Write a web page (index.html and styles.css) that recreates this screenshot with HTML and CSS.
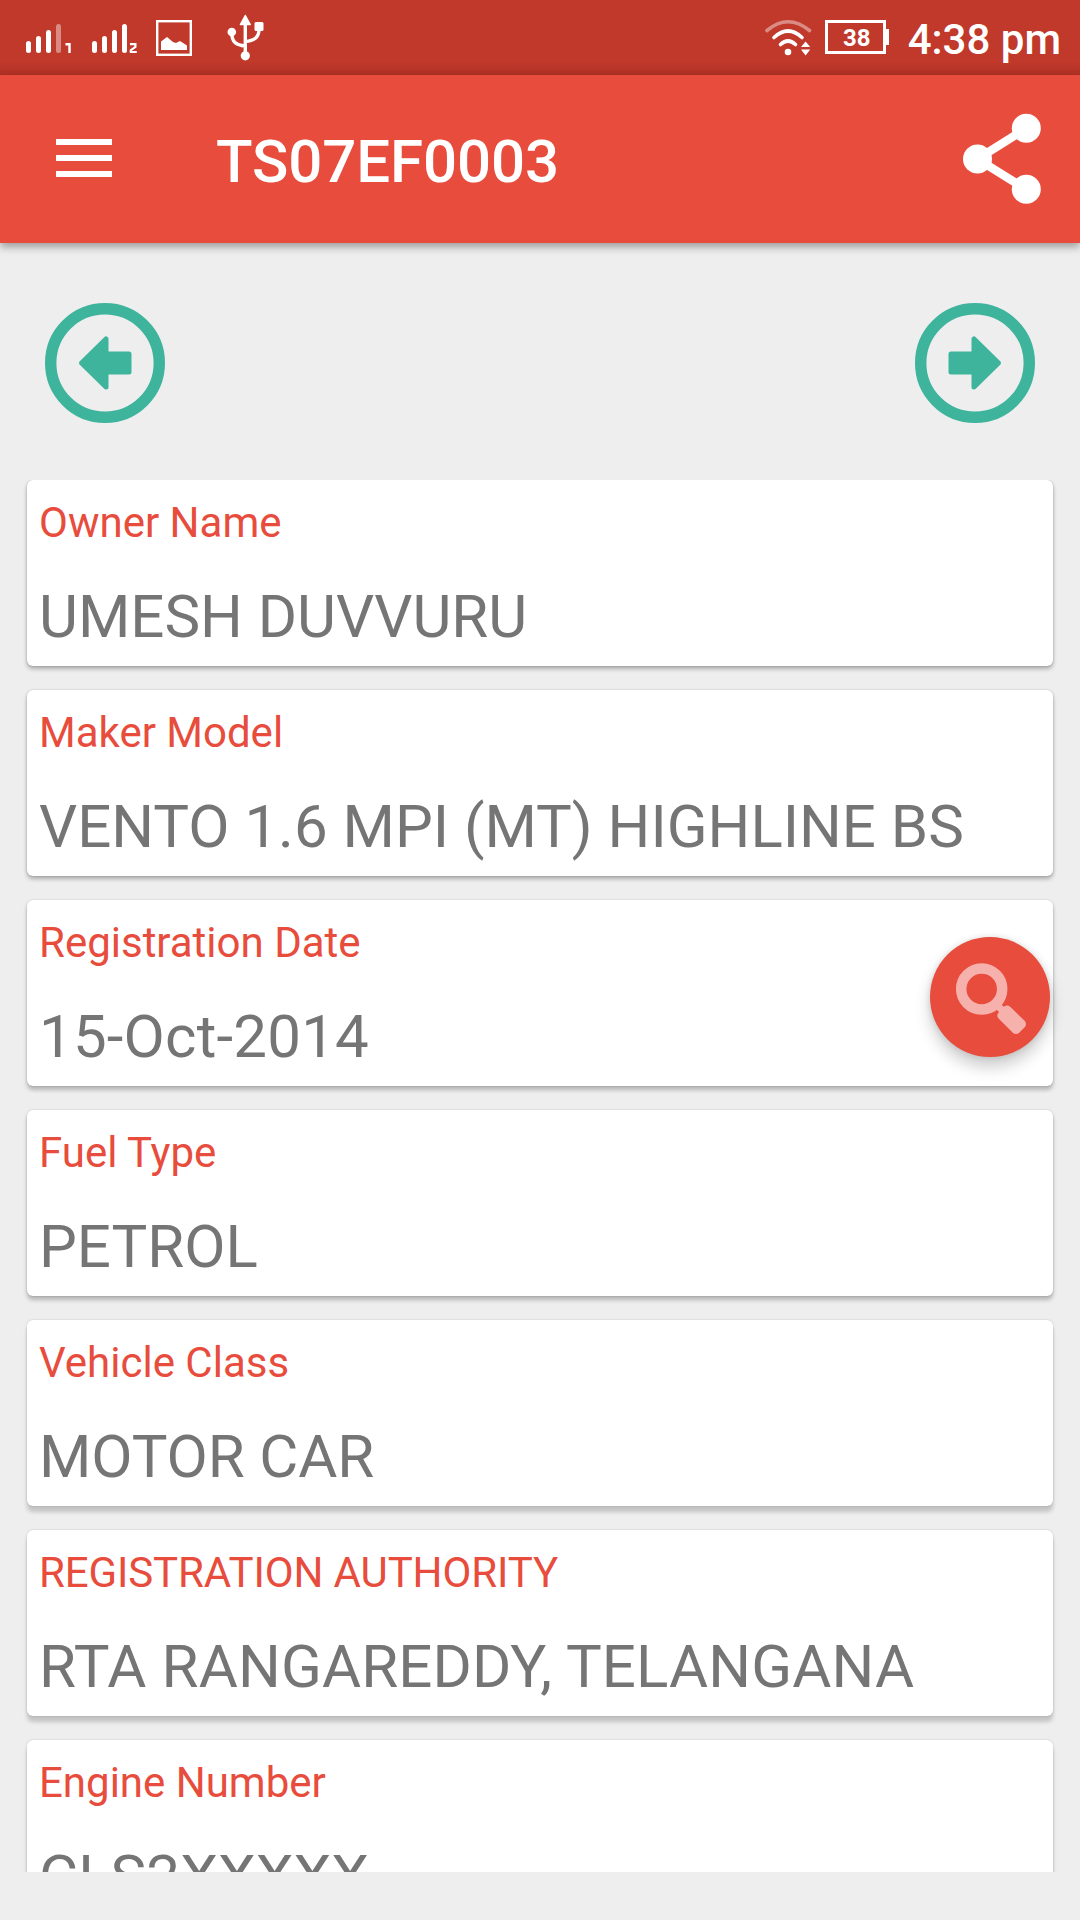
FILE: index.html
```html
<!DOCTYPE html>
<html lang="en">
<head>
<meta charset="utf-8">
<title>TS07EF0003</title>
<link rel="stylesheet" href="styles.css">
</head>
<body>
<div class="screen">
  <div class="status-bar">
    <div class="status-left">
      <svg class="signal" width="48" height="36" viewBox="0 0 48 36" fill="#fff">
        <rect x="2" y="21" width="5" height="12" rx="2.5"/>
        <rect x="12" y="16" width="5" height="17" rx="2.5"/>
        <rect x="22" y="10" width="5" height="23" rx="2.5"/>
        <rect x="32" y="4" width="5" height="29" rx="2.5" opacity=".42"/>
        <path d="M41.500 24.200h4v8.800" fill="none" stroke="#fff" stroke-width="2.400"/>
      </svg>
      <svg class="signal" width="48" height="36" viewBox="0 0 48 36" fill="#fff">
        <rect x="2" y="21" width="5" height="12" rx="2.5"/>
        <rect x="12" y="16" width="5" height="17" rx="2.5"/>
        <rect x="22" y="10" width="5" height="23" rx="2.5"/>
        <rect x="32" y="4" width="5" height="29" rx="2.5"/>
        <path d="M40 24.200h5.400v2.800l-4.600 3.200v1.800h6" fill="none" stroke="#fff" stroke-width="2.200"/>
      </svg>
      <svg class="picture" width="36" height="36" viewBox="0 0 36 36">
        <rect x="1.200" y="1.200" width="33.600" height="33.600" fill="none" stroke="#fff" stroke-width="2.400"/>
        <path d="M5 30V21.500L11 17l6 5 3 1 4-2 7 4.500V30z" fill="#fff"/>
      </svg>
      <svg class="usb" width="38" height="48" viewBox="0 0 38 48" fill="#fff">
        <path d="M18.300 2.500L23.200 11.500H13.400z" stroke="#fff" stroke-width="1.500" stroke-linejoin="round"/>
        <circle cx="4.800" cy="19" r="4.300"/>
        <rect x="27.500" y="9" width="9" height="9" rx="1.500"/>
        <circle cx="18.300" cy="42.800" r="4.600"/>
        <path d="M18.300 10V40M4.800 20c0 9 4 12 13.500 13M32 16c0 9-5 11.500-13.700 12.500" fill="none" stroke="#fff" stroke-width="3.400"/>
      </svg>
    </div>
    <div class="status-right">
      <svg class="wifi" width="48" height="40" viewBox="0 0 48 40" fill="none" stroke="#fff" stroke-width="3.600" stroke-linecap="round">
        <path d="M3 12.500Q24 -5 45.500 12.500" opacity=".42"/>
        <path d="M10 19.500Q24 6.500 38 19.500"/>
        <path d="M16.500 26.500Q24 19.500 31.500 26.500"/>
        <circle cx="24" cy="34" r="3.300" fill="#fff" stroke="none"/>
        <path d="M41.600 23.500l4.600 5.500H37zM41.600 37.500l4.600-6H37z" fill="#fff" stroke="none"/>
      </svg>
      <div class="battery">38</div>
      <div class="clock">4:38 pm</div>
    </div>
  </div>

  <header class="app-bar">
    <div class="menu"><span></span><span></span><span></span></div>
    <h1 class="title">TS07EF0003</h1>
    <svg class="share" width="80" height="92" viewBox="0 0 80 92" fill="#fff">
      <path d="M64.300 15.300L15.500 46l48.800 30.300" fill="none" stroke="#fff" stroke-width="8.500"/>
      <circle cx="64.300" cy="15.300" r="14.500"/>
      <circle cx="15.500" cy="46" r="14.500"/>
      <circle cx="64.300" cy="76.300" r="14.500"/>
    </svg>
  </header>

  <nav class="pager">
    <svg class="arrow" width="120" height="120" viewBox="0 0 120 120">
      <circle cx="60" cy="60" r="54.300" fill="none" stroke="#3eb49d" stroke-width="11.400"/>
      <path d="M36.500 60L61 36V51H84V69H61V84z" fill="#3eb49d" stroke="#3eb49d" stroke-width="5" stroke-linejoin="round"/>
    </svg>
    <svg class="arrow arrow-next" width="120" height="120" viewBox="0 0 120 120">
      <circle cx="60" cy="60" r="54.300" fill="none" stroke="#3eb49d" stroke-width="11.400"/>
      <path d="M36.500 60L61 36V51H84V69H61V84z" fill="#3eb49d" stroke="#3eb49d" stroke-width="5" stroke-linejoin="round"/>
    </svg>
  </nav>

  <main class="cards">
    <section class="card"><div class="label">Owner Name</div><div class="value">UMESH DUVVURU</div></section>
    <section class="card"><div class="label">Maker Model</div><div class="value">VENTO 1.6 MPI (MT) HIGHLINE BS</div></section>
    <section class="card"><div class="label">Registration Date</div><div class="value value-date">15-Oct-2014</div></section>
    <section class="card"><div class="label">Fuel Type</div><div class="value">PETROL</div></section>
    <section class="card"><div class="label">Vehicle Class</div><div class="value value-class">MOTOR CAR</div></section>
    <section class="card"><div class="label label-caps">REGISTRATION AUTHORITY</div><div class="value value-authority">RTA RANGAREDDY, TELANGANA</div></section>
    <section class="card"><div class="label">Engine Number</div><div class="value value-authority">CLS2XXXXX</div></section>
  </main>

  <div class="search-button">
    <svg width="120" height="120" viewBox="0 0 120 120" fill="none" stroke="#f7b1ad">
      <circle cx="51.700" cy="52" r="20.500" stroke-width="10.500"/>
      <path d="M65 66L74 75" stroke-width="7"/>
      <path d="M77 73L91.500 87L86 92.500L72 78.500z" fill="#f7b1ad" stroke-width="9" stroke-linejoin="round"/>
    </svg>
  </div>
</div>
</body>
</html>
```
FILE: styles.css
```css
* { box-sizing: border-box; }

body {
  margin: 0;
  background: #eee;
  font-family: Roboto, "Liberation Sans", sans-serif;
}

svg { display: block; flex: none; }

.screen {
  position: relative;
  display: flex;
  flex-direction: column;
  width: 1080px;
  height: 1920px;
  overflow: hidden;
  background: #eee;
}

.status-bar {
  display: flex;
  justify-content: space-between;
  height: 75px;
  padding: 0 19px 0 24px;
  color: #fff;
  background: linear-gradient(#c0392b 62px, #b03024 75px);
}

.status-left, .status-right { display: flex; align-items: flex-start; }
.signal { margin: 20px 18px 0 0; }
.picture { margin-top: 20px; }
.usb { margin: 13px 0 0 35px; }
.wifi { margin: 18px 13px 0 0; }

.battery {
  position: relative;
  width: 61px;
  height: 34px;
  margin-top: 20px;
  border: 3px solid #fff;
  font-size: 24px;
  font-weight: 700;
  line-height: 31px;
  text-align: center;
  padding-left: 3px;
}

.battery::after {
  content: "";
  position: absolute;
  top: 6px;
  right: -6px;
  width: 4px;
  height: 16px;
  background: #fff;
}

.clock {
  margin: 15px 0 0 22px;
  font-size: 42px;
  font-weight: 500;
  line-height: 50px;
  white-space: nowrap;
}

.app-bar {
  position: relative;
  display: flex;
  align-items: center;
  flex: none;
  height: 168px;
  padding: 0 38px 0 56px;
  color: #fff;
  background: #e84c3d;
  box-shadow: 0 4px 8px rgba(0, 0, 0, .34);
}

.menu {
  display: flex;
  flex-direction: column;
  gap: 10px;
  width: 56px;
  margin-bottom: 2px;
}

.menu span { height: 6px; background: #fff; }

.title {
  flex: 1;
  margin: 5px 0 0 104px;
  font-size: 60px;
  font-weight: 500;
  line-height: 70px;
  letter-spacing: -.1px;
}

.pager {
  display: flex;
  justify-content: space-between;
  flex: none;
  height: 237px;
  padding: 60px 45px 0;
}

.arrow-next { transform: scaleX(-1); }

.cards {
  display: flex;
  flex-direction: column;
  gap: 24px;
  flex: none;
  height: 1392px;
  padding: 0 27px;
  overflow: hidden;
}

.card {
  flex: none;
  height: 186px;
  padding: 18px 12px 0;
  border-radius: 6px;
  background: #fff;
  box-shadow: 0 3px 4px rgba(0, 0, 0, .28), 0 0 2px rgba(0, 0, 0, .2);
}

.card:nth-child(n+3) { box-shadow: 0 4px 4px rgba(0, 0, 0, .24), 0 0 2px rgba(0, 0, 0, .2); }
.card:nth-child(n+5) { box-shadow: 0 6px 4px rgba(0, 0, 0, .18), 0 0 2px rgba(0, 0, 0, .2); }

.label {
  color: #e74c3c;
  font-size: 42px;
  line-height: 49px;
  white-space: nowrap;
}

.label-caps { letter-spacing: -.12px; }

.value {
  margin-top: 35px;
  color: #757575;
  font-size: 60px;
  line-height: 70px;
  white-space: nowrap;
}

.value-date { letter-spacing: .2px; }
.value-class { letter-spacing: -.12px; }
.value-authority { letter-spacing: .12px; }

.search-button {
  position: absolute;
  top: 937px;
  left: 930px;
  width: 120px;
  height: 120px;
  border-radius: 50%;
  background: #e84c3d;
  box-shadow: 0 10px 16px rgba(0, 0, 0, .2), 0 0 6px rgba(0, 0, 0, .12);
}
```
